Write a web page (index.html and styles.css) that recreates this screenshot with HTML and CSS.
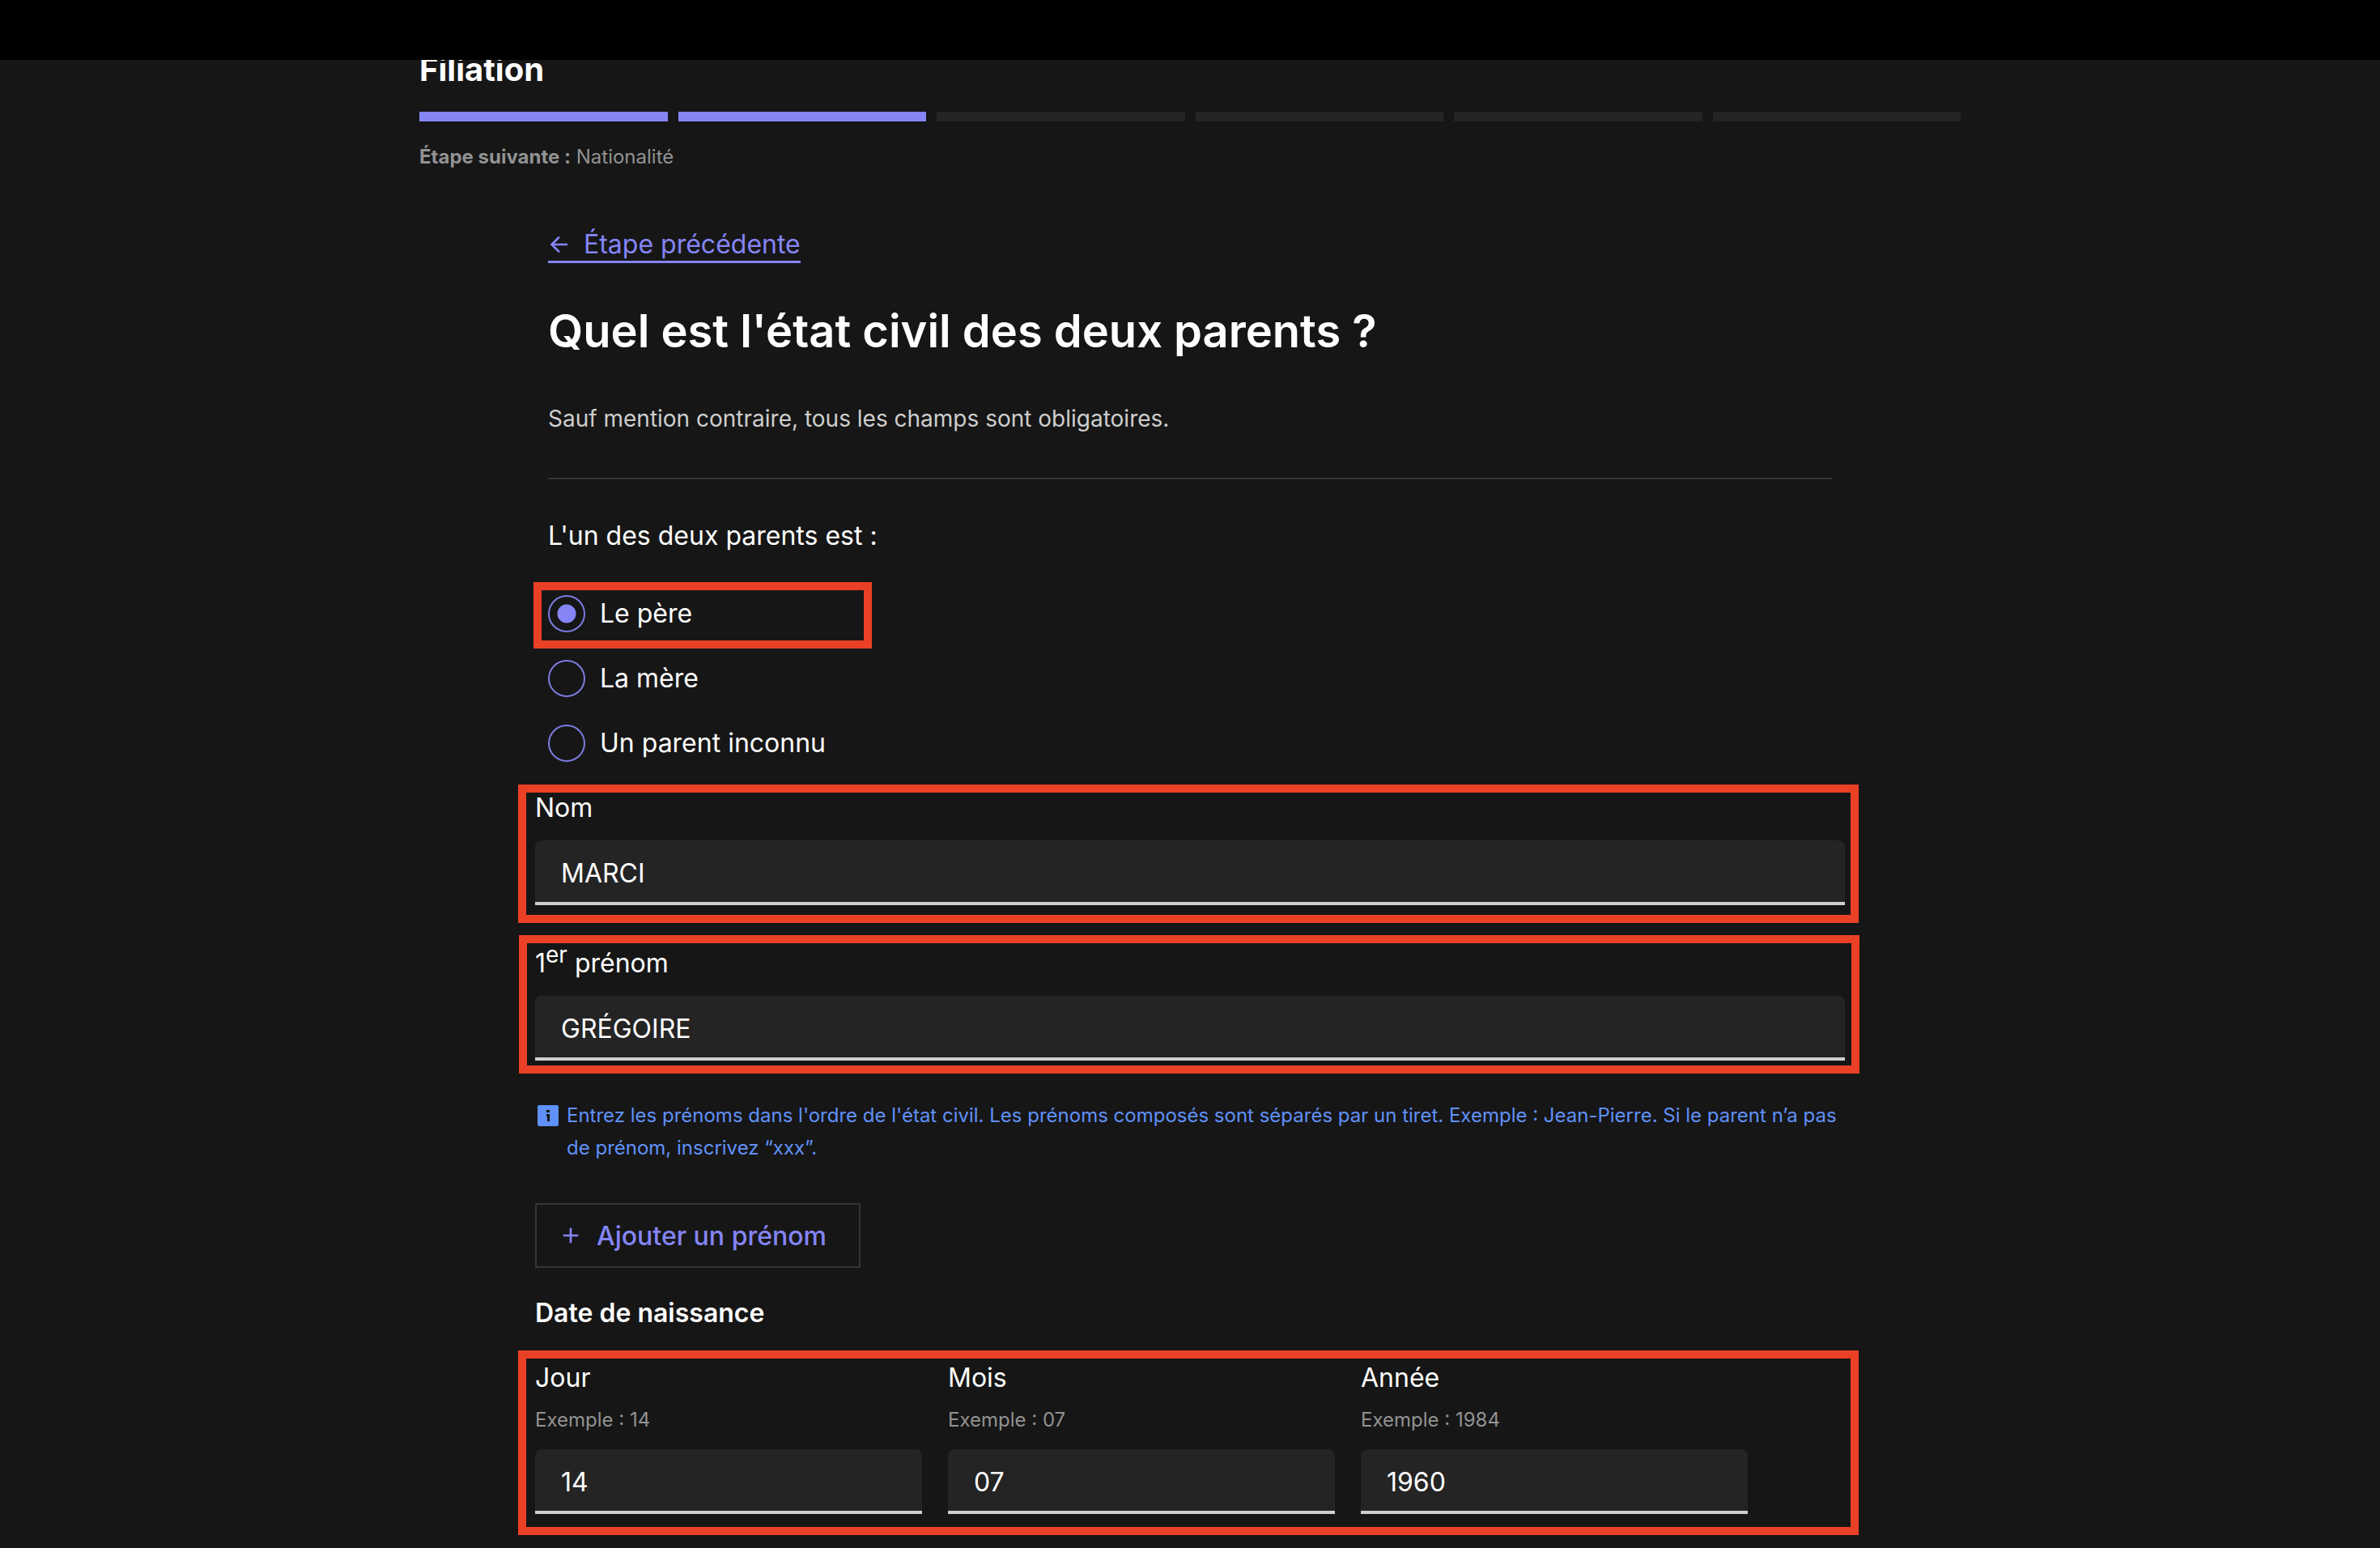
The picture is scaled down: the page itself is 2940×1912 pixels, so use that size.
FILE: index.html
```html
<!DOCTYPE html>
<html lang="fr">
<head>
    <meta charset="UTF-8">
    <meta name="viewport" content="width=device-width, initial-scale=1.0">
    <title>Filiation - État civil des deux parents</title>
    <link rel="stylesheet" href="styles.css">
</head>
<body>
<div class="top-bar"></div>

<main class="container">
    <section class="stepper">
        <h2 class="stepper-title">Filiation</h2>
        <div class="stepper-steps">
            <span class="step done"></span>
            <span class="step done"></span>
            <span class="step"></span>
            <span class="step"></span>
            <span class="step"></span>
            <span class="step"></span>
        </div>
        <p class="stepper-details"><strong>Étape suivante :</strong> Nationalité</p>
    </section>

    <div class="content">
        <a href="#" class="back-link">
            <svg class="icon-arrow" viewBox="2 3 18 18" aria-hidden="true">
                <path d="M7.828 11H20v2H7.828l5.364 5.364-1.414 1.414L4 12l7.778-7.778 1.414 1.414z"/>
            </svg>
            Étape précédente
        </a>

        <h1>Quel est l'état civil des deux parents ?</h1>
        <p class="notice">Sauf mention contraire, tous les champs sont obligatoires.</p>
        <hr>

        <form id="parent-form">
            <fieldset class="radio-group">
                <legend>L'un des deux parents est :</legend>
                <div class="radio-row highlight highlight-radio">
                    <input type="radio" id="parent-pere" name="parent" value="pere" checked>
                    <label for="parent-pere">Le père</label>
                </div>
                <div class="radio-row">
                    <input type="radio" id="parent-mere" name="parent" value="mere">
                    <label for="parent-mere">La mère</label>
                </div>
                <div class="radio-row">
                    <input type="radio" id="parent-inconnu" name="parent" value="inconnu">
                    <label for="parent-inconnu">Un parent inconnu</label>
                </div>
            </fieldset>

            <div class="fields">
                <div class="form-group highlight highlight-nom">
                    <label for="nom">Nom</label>
                    <input type="text" id="nom" name="nom" value="MARCI">
                </div>

                <div class="form-group highlight highlight-prenom">
                    <label for="prenom">1<sup>er</sup> prénom</label>
                    <input type="text" id="prenom" name="prenom" value="GRÉGOIRE" aria-describedby="prenom-info">
                </div>

                <p class="info" id="prenom-info">
                    <svg class="icon-info" viewBox="0 0 26 26" aria-hidden="true">
                        <path fill-rule="evenodd" d="M2 0h22a2 2 0 0 1 2 2v22a2 2 0 0 1-2 2H2a2 2 0 0 1-2-2V2a2 2 0 0 1 2-2zM11 6v3h4V6zM11 11v3h1v6h3v-9z"/>
                    </svg>
                    <span>Entrez les prénoms dans l'ordre de l'état civil. Les prénoms composés sont séparés par un tiret. Exemple : Jean-Pierre. Si le parent n’a pas de prénom, inscrivez “xxx”.</span>
                </p>

                <button type="button" class="add-btn">
                    <svg class="icon-add" viewBox="4.5 4.5 15 15" aria-hidden="true">
                        <path d="M11 11V5h2v6h6v2h-6v6h-2v-6H5v-2z"/>
                    </svg>
                    Ajouter un prénom
                </button>

                <fieldset class="birth-date">
                    <legend>Date de naissance</legend>
                    <div class="date-row highlight highlight-date">
                        <div class="form-group">
                            <label for="jour">Jour</label>
                            <span class="hint" id="jour-hint">Exemple : 14</span>
                            <input type="text" id="jour" name="jour" inputmode="numeric" value="14" aria-describedby="jour-hint">
                        </div>
                        <div class="form-group">
                            <label for="mois">Mois</label>
                            <span class="hint" id="mois-hint">Exemple : 07</span>
                            <input type="text" id="mois" name="mois" inputmode="numeric" value="07" aria-describedby="mois-hint">
                        </div>
                        <div class="form-group">
                            <label for="annee">Année</label>
                            <span class="hint" id="annee-hint">Exemple : 1984</span>
                            <input type="text" id="annee" name="annee" inputmode="numeric" value="1960" aria-describedby="annee-hint">
                        </div>
                    </div>
                </fieldset>
            </div>
        </form>
    </div>
</main>
</body>
</html>
```
FILE: styles.css
```css
/* Global Styles */
*, *::after {
    margin: 0;
    padding: 0;
    box-sizing: border-box;
}

body {
    background-color: #161616;
    color: #fff;
    font-family: Inter, "Open Sans", sans-serif;
    font-size: 32px;
    line-height: 48px;
}

fieldset {
    border: none;
    min-width: 0;
}

legend, label {
    display: block;
}

svg {
    fill: currentColor;
    flex-shrink: 0;
}

/* Black band that covers the top of the scrolled page */
.top-bar {
    position: fixed;
    top: 0;
    left: 0;
    right: 0;
    height: 74px;
    background-color: #000;
    z-index: 10;
}

.container {
    max-width: 1904px;
    margin: 0 auto;
    padding-top: 58px;
    padding-bottom: 40px;
}

/* Stepper */
.stepper-title {
    font-size: 40px;
    line-height: 56px;
    font-weight: 700;
    margin-bottom: 24px;
}

.stepper-steps {
    display: flex;
    gap: 13px;
    margin-bottom: 24px;
}

.step {
    flex: 1;
    height: 12px;
    background-color: #242424;
}

.step.done {
    background-color: #8585f6;
}

.stepper-details {
    font-size: 24px;
    line-height: 40px;
    color: #929292;
}

/* Content */
.content {
    padding: 68px 159px 0;
}

.back-link {
    display: flex;
    width: fit-content;
    align-items: center;
    gap: 20px;
    line-height: 40px;
    color: #8585f6;
    text-decoration: none;
    border-bottom: 3px solid #8585f6;
}

.icon-arrow {
    width: 24px;
    height: 24px;
}

h1 {
    font-size: 56px;
    line-height: 72px;
    font-weight: 600;
    margin: 48px 0;
}

.notice {
    font-size: 28px;
    color: #cecece;
}

hr {
    border: none;
    height: 2px;
    background-color: #353535;
    margin: 49px 0 46px;
}

/* Radio buttons */
.radio-group legend {
    margin-bottom: 48px;
}

.radio-row {
    display: flex;
    align-items: center;
    gap: 18px;
    margin-bottom: 32px;
}

.radio-row input {
    appearance: none;
    width: 46px;
    height: 46px;
    border: 2px solid #7b7be2;
    border-radius: 50%;
}

.radio-row input:checked {
    background: radial-gradient(circle, #8585f6 11px, transparent 12px);
}

/* Fields */
.fields {
    margin: 0 -16px;
}

.form-group label {
    margin-bottom: 16px;
}

.form-group sup {
    font-size: 28px;
    line-height: 0;
}

input[type="text"] {
    display: block;
    width: 100%;
    height: 80px;
    padding: 0 32px;
    background-color: #242424;
    color: #fff;
    font-family: inherit;
    font-size: 32px;
    border: none;
    border-radius: 8px 8px 0 0;
    box-shadow: inset 0 -4px 0 #cecece;
    outline: none;
}

.highlight-prenom {
    margin: 48px 0;
}

.info {
    display: flex;
    gap: 10px;
    padding: 0 3px;
    font-size: 24px;
    line-height: 40px;
    color: #6091f9;
}

.icon-info {
    width: 26px;
    height: 26px;
    margin-top: 7px;
}

.add-btn {
    display: flex;
    align-items: center;
    gap: 22px;
    height: 80px;
    margin: 48px 0 32px;
    padding: 0 40px 0 32px;
    background: none;
    border: 2px solid #353535;
    color: #8585f6;
    font-family: inherit;
    font-size: 32px;
    font-weight: 500;
    cursor: pointer;
}

.icon-add {
    width: 20px;
    height: 20px;
}

/* Date of birth */
.birth-date legend {
    font-weight: 600;
    margin-bottom: 32px;
}

.date-row {
    display: grid;
    grid-template-columns: repeat(3, 1fr);
    gap: 32px;
    padding-right: 120px;
}

.date-row label {
    margin-bottom: 8px;
}

.hint {
    display: block;
    font-size: 24px;
    line-height: 40px;
    color: #929292;
    margin-bottom: 16px;
}

/* Red frames drawn over the parts to fill in */
.highlight {
    position: relative;
}

.highlight::after {
    content: "";
    position: absolute;
    border: 10px solid #ea4025;
    pointer-events: none;
}

.highlight-radio::after {
    top: -15px;
    bottom: -19px;
    left: -18px;
    width: 418px;
}

.highlight-nom::after {
    inset: -5px -17px -22px -21px;
}

.highlight-prenom::after {
    inset: -11px -18px -16px -20px;
}

.highlight-date::after {
    inset: -10px -17px -26px -21px;
}

/* Responsive Design */
@media (max-width: 1960px) {
    .container {
        padding-left: 40px;
        padding-right: 40px;
    }

    .content {
        padding-left: 0;
        padding-right: 0;
    }
}
```
